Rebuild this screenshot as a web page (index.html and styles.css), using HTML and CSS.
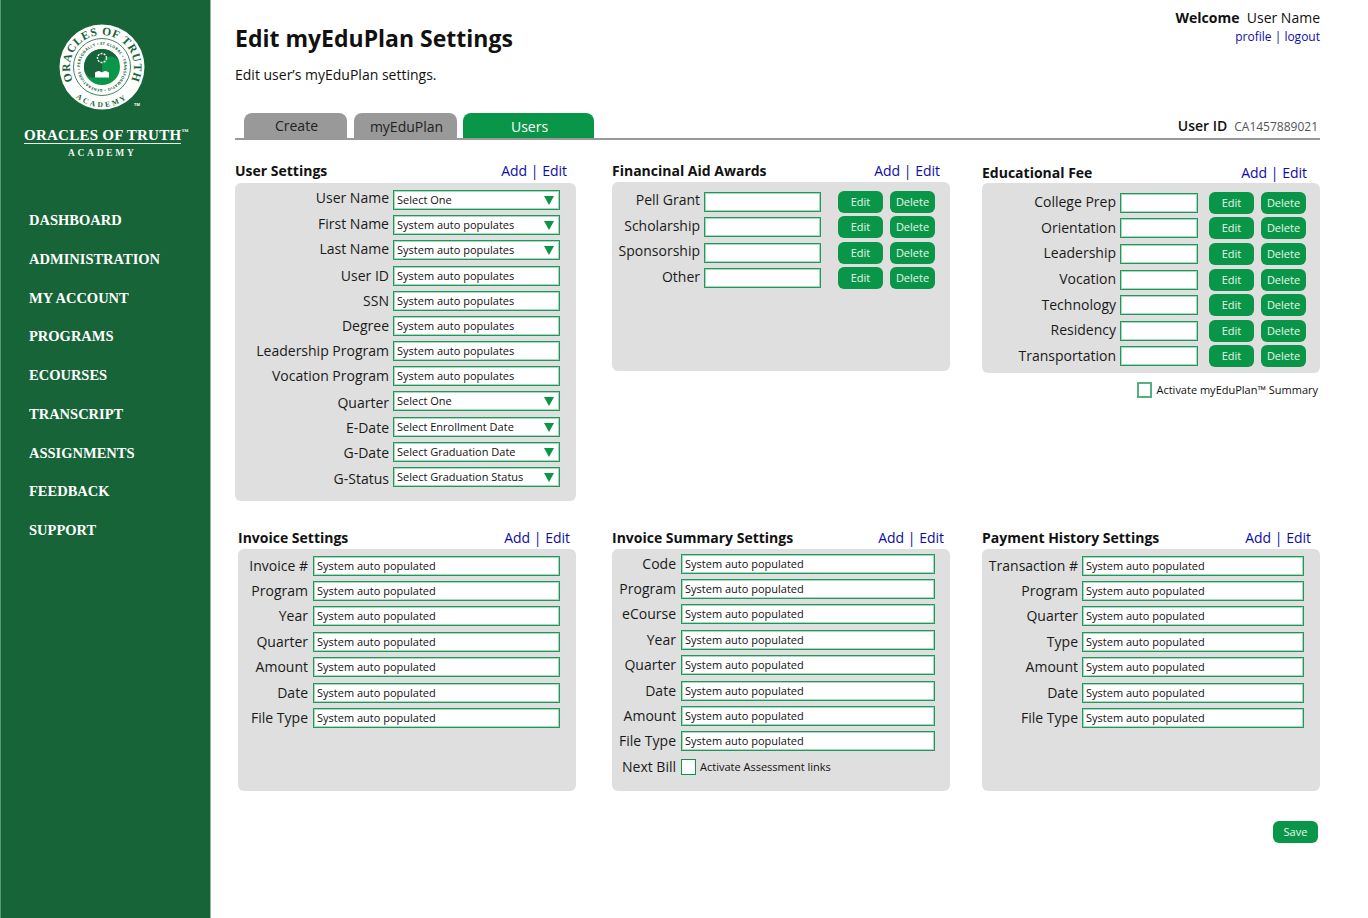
FILE: index.html
```html
<!DOCTYPE html>
<html lang="en">
<head>
<meta charset="utf-8">
<title>Edit myEduPlan Settings</title>
<link rel="stylesheet" href="styles.css">
</head>
<body>
<div class="app">
<aside class="sidebar">
  <div class="brand">
    <svg class="seal" width="90" height="90" viewBox="0 0 90 90" aria-hidden="true">
      <circle cx="44" cy="44" r="42.500" fill="#fff"/>
      <circle cx="44" cy="44" r="28.500" fill="none" stroke="#166437" stroke-width=".8"/>
      <circle cx="44" cy="44" r="18" fill="#0a9648"/>
      <path d="M44 26A18 18 0 0 0 44 62A9 9 0 0 0 44 44A9 9 0 0 1 44 26Z" fill="#166437" transform="rotate(80 44 44)"/>
      <circle cx="44" cy="35" r="4.500" fill="none" stroke="#fff" stroke-width="1.400" stroke-dasharray="2 1.200"/>
      <path d="M37 49.500c2.500-2 5-2 7 0 2-2 4.500-2 7 0v5H37z" fill="#fff"/>
      <path id="sealTop" d="M13.900 54.900A32 32 0 1 1 74.100 54.900" fill="none"/>
      <path id="sealMid" d="M22 44A22 22 0 1 1 66 44A22 22 0 1 1 22 44" fill="none"/>
      <path id="sealBot" d="M11.200 66.900A40 40 0 0 0 76.800 66.900" fill="none"/>
      <text class="seal-big"><textPath href="#sealTop" startOffset="50%" text-anchor="middle">ORACLES OF TRUTH</textPath></text>
      <text class="seal-small"><textPath href="#sealMid" textLength="136">PERSONALLY • ET GLOBAL • TRANSFORMATIO • GENERATIONS •</textPath></text>
      <text class="seal-acad"><textPath href="#sealBot" startOffset="50%" text-anchor="middle">ACADEMY</textPath></text>
      <text class="seal-tm" x="76" y="83">TM</text>
    </svg>
    <div class="brand-name">ORACLES OF TRUTH<sup>™</sup></div>
    <div class="brand-sub">ACADEMY</div>
  </div>
  <nav class="nav">
    <a>DASHBOARD</a><a>ADMINISTRATION</a><a>MY ACCOUNT</a><a>PROGRAMS</a><a>ECOURSES</a><a>TRANSCRIPT</a><a>ASSIGNMENTS</a><a>FEEDBACK</a><a>SUPPORT</a>
  </nav>
</aside>

<main class="main">
  <header class="top">
    <div>
      <h1>Edit myEduPlan Settings</h1>
      <p class="lead">Edit user’s myEduPlan settings.</p>
    </div>
    <div class="welcome">
      <div><b>Welcome</b>&nbsp; User Name</div>
      <div class="links"><a>profile</a> | <a>logout</a></div>
    </div>
  </header>

  <div class="tabbar">
    <div class="tab">Create</div>
    <div class="tab tab-mid">myEduPlan</div>
    <div class="tab tab-active">Users</div>
    <div class="userid"><b>User ID</b><span>CA1457889021</span></div>
  </div>

  <div class="cols">
    <section class="col col-user">
      <div class="head"><h2>User Settings</h2><div class="actions"><a>Add</a> | <a>Edit</a></div></div>
      <div class="panel panel-user">
        <label>User Name</label><div class="field sel">Select One</div>
        <label>First Name</label><div class="field sel">System auto populates</div>
        <label>Last Name</label><div class="field sel">System auto populates</div>
        <label>User ID</label><div class="field">System auto populates</div>
        <label>SSN</label><div class="field">System auto populates</div>
        <label>Degree</label><div class="field">System auto populates</div>
        <label>Leadership Program</label><div class="field">System auto populates</div>
        <label>Vocation Program</label><div class="field">System auto populates</div>
        <label>Quarter</label><div class="field sel">Select One</div>
        <label>E-Date</label><div class="field sel">Select Enrollment Date</div>
        <label>G-Date</label><div class="field sel">Select Graduation Date</div>
        <label>G-Status</label><div class="field sel">Select Graduation Status</div>
      </div>
    </section>

    <section class="col col-aid">
      <div class="head"><h2>Financinal Aid Awards</h2><div class="actions"><a>Add</a> | <a>Edit</a></div></div>
      <div class="panel panel-aid">
        <label>Pell Grant</label><div class="field"></div><button class="btn btn-edit">Edit</button><button class="btn">Delete</button>
        <label>Scholarship</label><div class="field"></div><button class="btn btn-edit">Edit</button><button class="btn">Delete</button>
        <label>Sponsorship</label><div class="field"></div><button class="btn btn-edit">Edit</button><button class="btn">Delete</button>
        <label>Other</label><div class="field"></div><button class="btn btn-edit">Edit</button><button class="btn">Delete</button>
      </div>
    </section>

    <section class="col col-fee">
      <div class="head"><h2>Educational Fee</h2><div class="actions"><a>Add</a> | <a>Edit</a></div></div>
      <div class="panel panel-fee">
        <label>College Prep</label><div class="field"></div><button class="btn btn-edit">Edit</button><button class="btn">Delete</button>
        <label>Orientation</label><div class="field"></div><button class="btn btn-edit">Edit</button><button class="btn">Delete</button>
        <label>Leadership</label><div class="field"></div><button class="btn btn-edit">Edit</button><button class="btn">Delete</button>
        <label>Vocation</label><div class="field"></div><button class="btn btn-edit">Edit</button><button class="btn">Delete</button>
        <label>Technology</label><div class="field"></div><button class="btn btn-edit">Edit</button><button class="btn">Delete</button>
        <label>Residency</label><div class="field"></div><button class="btn btn-edit">Edit</button><button class="btn">Delete</button>
        <label>Transportation</label><div class="field"></div><button class="btn btn-edit">Edit</button><button class="btn">Delete</button>
      </div>
      <div class="activate"><span class="check"></span>Activate myEduPlan™ Summary</div>
    </section>
  </div>

  <div class="cols cols-low">
    <section class="col col-inv">
      <div class="head"><h2>Invoice Settings</h2><div class="actions"><a>Add</a> | <a>Edit</a></div></div>
      <div class="panel panel-inv">
        <label>Invoice #</label><div class="field">System auto populated</div>
        <label>Program</label><div class="field">System auto populated</div>
        <label>Year</label><div class="field">System auto populated</div>
        <label>Quarter</label><div class="field">System auto populated</div>
        <label>Amount</label><div class="field">System auto populated</div>
        <label>Date</label><div class="field">System auto populated</div>
        <label>File Type</label><div class="field">System auto populated</div>
      </div>
    </section>

    <section class="col col-sum">
      <div class="head"><h2>Invoice Summary Settings</h2><div class="actions"><a>Add</a> | <a>Edit</a></div></div>
      <div class="panel panel-sum">
        <label>Code</label><div class="field">System auto populated</div>
        <label>Program</label><div class="field">System auto populated</div>
        <label>eCourse</label><div class="field">System auto populated</div>
        <label>Year</label><div class="field">System auto populated</div>
        <label>Quarter</label><div class="field">System auto populated</div>
        <label>Date</label><div class="field">System auto populated</div>
        <label>Amount</label><div class="field">System auto populated</div>
        <label>File Type</label><div class="field">System auto populated</div>
        <label>Next Bill</label><div class="assess"><span class="check"></span>Activate Assessment links</div>
      </div>
    </section>

    <section class="col col-pay">
      <div class="head"><h2>Payment History Settings</h2><div class="actions"><a>Add</a> | <a>Edit</a></div></div>
      <div class="panel panel-pay">
        <label>Transaction #</label><div class="field">System auto populated</div>
        <label>Program</label><div class="field">System auto populated</div>
        <label>Quarter</label><div class="field">System auto populated</div>
        <label>Type</label><div class="field">System auto populated</div>
        <label>Amount</label><div class="field">System auto populated</div>
        <label>Date</label><div class="field">System auto populated</div>
        <label>File Type</label><div class="field">System auto populated</div>
      </div>
    </section>
  </div>

  <div class="foot"><button class="btn btn-save">Save</button></div>
</main>
</div>
</body>
</html>
```

FILE: styles.css
```css
* { box-sizing: border-box; }
html, body { margin: 0; padding: 0; height: 100%; background: #fff; }
body { font-family: "Open Sans", sans-serif; color: #111; overflow: hidden; }

.app { display: flex; height: 918px; }

/* Sidebar */
.sidebar {
  width: 211px; flex: none; background: #166437;
  border-left: 1px solid #5b9a78; border-right: 1px solid #8fb7a1;
}
.brand { display: flex; flex-direction: column; align-items: flex-start; padding-top: 23px; }
.seal { margin-left: 57px; display: block; }
.seal-big { font: bold 11.500px "Liberation Serif", serif; fill: #166437; letter-spacing: .7px; }
.seal-small { font: bold 3.800px "Open Sans", sans-serif; fill: #166437; }
.seal-acad { font: bold 7.500px "Liberation Serif", serif; fill: #166437; letter-spacing: 2.500px; }
.seal-tm { font: bold 4px "Open Sans", sans-serif; fill: #fff; }
.brand-name {
  margin: 14px 0 0 23px; width: 157px; border-bottom: 1px solid #e8efe9;
  font: bold 15px/16px "Liberation Serif", serif; letter-spacing: .25px; color: #fff; white-space: nowrap;
}
.brand-name sup { font-size: 7px; line-height: 0; letter-spacing: 0; vertical-align: 6px; }
.brand-sub { margin: 3px 0 0 67px; font: bold 9.500px/12px "Liberation Serif", serif; letter-spacing: 2.700px; color: #eef4ef; }

.nav { display: flex; flex-direction: column; padding: 51px 0 0 28px; }
.nav a { height: 38.750px; font: bold 14.500px/20px "Liberation Serif", serif; color: #fff; white-space: nowrap; }

/* Main column */
.main { flex: 1; padding: 0 48px 0 24px; min-width: 0; }

.top { display: flex; justify-content: space-between; height: 113px; }
h1 { margin: 22px 0 0; font-size: 23px; line-height: 32px; font-weight: 700; color: #111; }
.lead { margin: 11px 0 0; font-size: 14px; line-height: 20px; }
.welcome { text-align: right; font-size: 14px; line-height: 20px; padding-top: 8px; }
.welcome b { font-weight: 700; }
.links { font-size: 12px; line-height: 18px; color: #0c0c8c; }
.links a, .actions a { color: #0c0ca8; }

.tabbar { display: flex; align-items: flex-end; height: 27px; border-bottom: 2px solid #999; padding-left: 9px; }
.tab {
  width: 103px; height: 25px; margin-right: 7px; padding-left: 2px; background: #999; border-radius: 8px 8px 0 0;
  text-align: center; font-size: 14px; line-height: 25px; color: #222;
}
.tab-mid { margin-right: 6px; line-height: 27px; }
.tab-active { width: 131px; background: #0a9648; color: #fff; line-height: 28px; }
.userid { margin-left: auto; display: flex; align-items: baseline; gap: 7px; padding: 0 2px 1px 0; font-size: 14px; line-height: 20px; }
.userid b { font-weight: 600; }
.userid span { font-size: 12px; color: #555; }

/* Columns */
.cols { display: grid; grid-template-columns: 341px 338px 338px; column-gap: 36px; margin-top: 19px; align-items: start; }
.cols-low { margin-top: 25px; }
.col-fee, .col-pay { width: 338px; margin-left: -4px; }
.col-inv { margin-left: 3px; }

.head { display: flex; justify-content: space-between; align-items: center; height: 23px; padding-right: 9px; }
.col-user .head { height: 24px; padding-bottom: 1px; }
.col-fee .head { height: 24px; padding: 3px 13px 0 0; }
.col-aid .head { padding-right: 10px; }
.col-inv .head, .col-sum .head { padding-right: 6px; }
h2 { margin: 0; font-size: 14px; line-height: 20px; font-weight: 700; white-space: nowrap; }
.actions { font-size: 14px; line-height: 20px; color: #0c0ca8; }

.panel {
  background: #dfdfdf; border-radius: 6px; display: grid; align-items: center; column-gap: 4px;
  grid-auto-rows: 25.300px; padding-top: 4px; font-size: 14px;
}
.panel label { text-align: right; white-space: nowrap; color: #1a1a1a; line-height: 20px; padding-bottom: 3px; }

.field {
  height: 20px; background: #fff; border: 1px solid #1c9a5b; box-shadow: inset 0 0 0 1px #a9d8bf;
  font-size: 11px; line-height: 16px; padding: 1px 0 1px 3px; color: #111; white-space: nowrap; position: relative;
}
.sel::after {
  content: ""; position: absolute; right: 5px; top: 5px;
  border-left: 5px solid transparent; border-right: 5px solid transparent; border-top: 9px solid #0a9648;
}

.btn {
  border: 0; padding: 0; height: 22px; width: 45px; background: #0a9648; color: #e9f6ee; border-radius: 6px;
  font: 11px/22px "Open Sans", sans-serif; text-align: center;
}

.panel-user { height: 318px; grid-template-columns: 154px 167px; grid-auto-rows: 25.200px; padding-top: 4.400px; }
.panel-user label:nth-of-type(n+4) { padding-bottom: 0; }
.panel-user label:nth-of-type(n+9) { padding-bottom: 0; padding-top: 3px; }

.panel-aid { height: 189px; grid-template-columns: 88px 117px 61px 45px; grid-auto-rows: 25.500px; padding-top: 7px; }
.panel-aid .btn-edit { margin-left: 13px; }
.panel-fee { height: 190px; grid-template-columns: 134px 78px 55px 45px; grid-auto-rows: 25.600px; padding-top: 7px; }
.panel-fee .btn-edit { margin-left: 7px; }
.panel-fee label { padding-bottom: 1px; }

.activate { display: flex; align-items: center; justify-content: flex-end; font-size: 11px; line-height: 16px; margin-top: 9px; white-space: nowrap; padding-right: 2px; }
.check { display: inline-block; width: 15px; height: 16px; background: #fff; border: 1px solid #55b081; margin-right: 5px; }
.activate .check { margin-right: 4px; border-width: 2px; background: transparent; }
.assess { display: flex; align-items: center; font-size: 11px; white-space: nowrap; }
.assess .check { border-color: #0a9648; margin-right: 4px; }

.panel-inv, .panel-sum, .panel-pay { height: 242px; grid-auto-rows: 25.400px; }
.panel-inv label, .panel-sum label, .panel-pay label { padding-bottom: 0; }
.panel-inv { grid-template-columns: 70px 247px; column-gap: 5px; padding-top: 4px; }
.panel-sum { grid-template-columns: 64px 254px; column-gap: 5px; padding-top: 2px; }
.panel-pay { grid-template-columns: 96px 222px; padding-top: 4px; }

.foot { display: flex; justify-content: flex-end; padding: 30px 2px 0 0; }
```
